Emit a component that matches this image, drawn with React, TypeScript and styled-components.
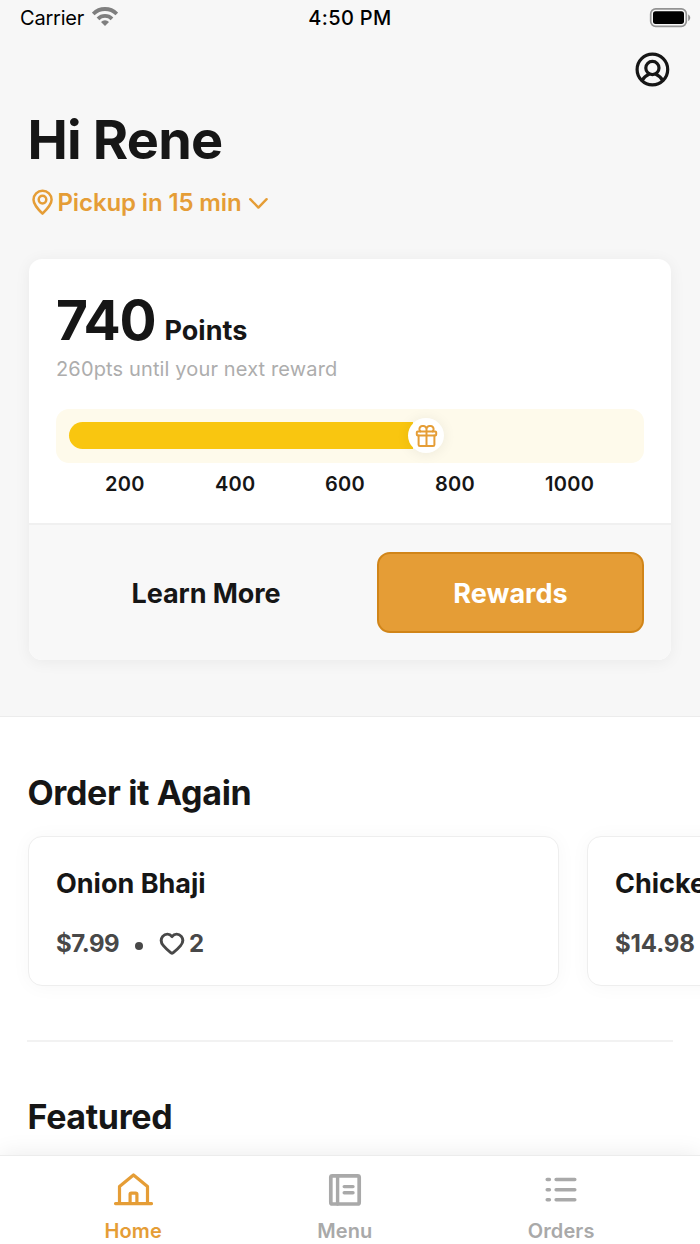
import React from "react";
import styled, { createGlobalStyle } from "styled-components";

const GlobalStyle = createGlobalStyle`
  * { box-sizing: border-box; }
  body { margin: 0; background: #fff; font-family: Inter, "Liberation Sans", sans-serif; color: #161616; }
  svg { display: block; flex: none; }
  button { font: inherit; color: inherit; border: 0; background: none; padding: 0; }
`;

const Screen = styled.div`
  width: 700px;
  height: 1244px;
  overflow: hidden;
  display: flex;
  flex-direction: column;
  background: #fff;
`;
const Scroll = styled.main`
  flex: 1;
  min-height: 0;
  overflow: hidden;
`;
const Hero = styled.section`
  height: 717px;
  background: #f7f7f7;
  border-bottom: 1px solid #ececec;
`;
const StatusBar = styled.div`
  height: 36px;
  display: grid;
  grid-template-columns: 1fr auto 1fr;
  align-items: center;
  padding: 0 9px;
  font-size: 20px;
  line-height: 36px;
  color: #000;
`;
const Carrier = styled.div`
  display: flex;
  align-items: center;
  gap: 8px;
  margin-left: 11px;
  letter-spacing: -0.2px;

  svg { margin-top: -3px; }
`;
const Clock = styled.div`
  font-weight: 500;
  letter-spacing: 0.35px;
`;
const Battery = styled.div`
  justify-self: end;
`;
const TopActions = styled.div`
  display: flex;
  justify-content: flex-end;
  padding: 15px 30px 0 0;
`;
const Greeting = styled.h1`
  margin: 18px 0 0 27.5px;
  font-size: 54px;
  line-height: 70px;
  font-weight: 700;
  letter-spacing: -0.8px;
`;
const Pickup = styled.button`
  display: flex;
  align-items: center;
  margin: 12px 0 0 31px;
  height: 32px;
  font-size: 24px;
  line-height: 32px;
  font-weight: 600;
  color: #e59d36;
`;
const PickupText = styled.span`
  margin: 0 6px 0 3.5px;
  letter-spacing: -0.12px;
`;
const PointsCard = styled.div`
  margin: 40px 29px 0;
  height: 401px;
  border-radius: 13px;
  overflow: hidden;
  background: #fff;
  box-shadow: 0 2px 16px rgba(0, 0, 0, 0.06);
`;
const PointsBody = styled.div`
  height: 266px;
  padding: 26px 27px 0;
  border-bottom: 2px solid #f0f0f0;
`;
const PointsTotal = styled.div`
  display: flex;
  align-items: baseline;
  gap: 9px;
  height: 70px;
  line-height: 70px;
  font-weight: 700;
`;
const Total = styled.span`
  font-size: 55px;
  letter-spacing: -1.2px;
`;
const Unit = styled.span`
  font-size: 27px;
  line-height: 1;
  letter-spacing: 0;
`;
const Hint = styled.div`
  line-height: 28px;
  font-size: 20px;
  letter-spacing: 0.14px;
  color: #adadad;
`;
const Track = styled.div`
  margin-top: 26px;
  height: 54px;
  padding: 0 13px 1px;
  display: flex;
  align-items: center;
  border-radius: 13px;
  background: #fefaeb;
`;
const Fill = styled.div`
  width: 344px;
  height: 27px;
  border-radius: 13.5px 0 0 13.5px;
  background: #f9c610;
`;
const Thumb = styled.div`
  width: 36px;
  height: 35px;
  margin-left: -5px;
  display: grid;
  place-items: center;
  border-radius: 50%;
  background: #fff;
  box-shadow: 0 1px 14px rgba(0, 0, 0, 0.07);
`;
const Scale = styled.div`
  display: grid;
  grid-template-columns: repeat(5, 110px);
  padding-left: 49px;
  margin-top: 6px;
  font-size: 20px;
  line-height: 30px;
  font-weight: 600;
  letter-spacing: 0.3px;
`;
const PointsActions = styled.div`
  height: 135px;
  display: grid;
  grid-template-columns: 300px 267px;
  justify-content: space-between;
  padding: 27px;
  background: #f8f8f8;
`;
const ActionButton = styled.button<{ $primary?: boolean }>`
  padding-top: 2px;
  border: 2px solid ${(p) => (p.$primary ? "#d18519" : "transparent")};
  border-radius: 13px;
  background: ${(p) => (p.$primary ? "#e59d36" : "transparent")};
  color: ${(p) => (p.$primary ? "#fff" : "#161616")};
  font-size: 27px;
  font-weight: 700;
  letter-spacing: ${(p) => (p.$primary ? "0.05px" : "-0.1px")};
`;
const SectionTitle = styled.h2`
  margin: 54px 0 0 27.5px;
  font-size: 34px;
  line-height: 44px;
  font-weight: 700;
  letter-spacing: -0.35px;
`;
const Carousel = styled.div`
  display: flex;
  gap: 28px;
  margin-top: 21px;
  padding-left: 28px;
`;
const DishCard = styled.article`
  flex: none;
  width: 531px;
  height: 150px;
  padding: 30px 27px 28px;
  border: 1px solid #eeeeee;
  border-radius: 14px;
  background: #fff;
  box-shadow: 0 1px 20px rgba(0, 0, 0, 0.035);
`;
const DishName = styled.div`
  font-size: 27px;
  line-height: 34px;
  font-weight: 700;
`;
const DishMeta = styled.div`
  display: flex;
  align-items: center;
  margin-top: 27px;
  font-size: 24px;
  line-height: 32px;
  font-weight: 700;
  color: #484848;
`;
const Price = styled.span<{ $tracking: number }>`
  letter-spacing: ${(p) => p.$tracking}px;
`;
const Bullet = styled.span`
  width: 8px;
  height: 8px;
  margin: 3px 16px 0 16px;
  border-radius: 50%;
  background: currentColor;
`;
const Likes = styled.span`
  display: flex;
  align-items: center;
  gap: 4px;
`;
const Divider = styled.hr`
  margin: 54px 27px -1px;
  border: 0;
  height: 2px;
  background: #f2f2f2;
`;
const TabBar = styled.nav`
  position: relative;
  height: 89px;
  display: flex;
  justify-content: space-between;
  padding: 17px 105.5px 0 104.5px;
  border-top: 1px solid #ececec;
  background: #fff;
  box-shadow: 0 -1px 22px rgba(0, 0, 0, 0.08);
`;
const Tab = styled.button<{ $active?: boolean }>`
  display: flex;
  flex-direction: column;
  align-items: center;
  gap: 10px;
  height: 72px;
  font-size: 20px;
  line-height: 28px;
  font-weight: 600;
  letter-spacing: 0.1px;
  color: ${(p) => (p.$active ? "#e59d36" : "#a9a9a9")};
`;

const Svg = styled.svg.attrs({ fill: "none", stroke: "currentColor", strokeLinecap: "round", strokeLinejoin: "round" })``;

const WifiIcon = () => (
  <Svg width="26" height="19" viewBox="0 0 26 19" color="#7f7f7f" strokeWidth="3.8">
    <path d="M1.2 6.9a16.7 16.7 0 0 1 23.6 0M6 11.800a9.900 9.900 0 0 1 14 0" strokeLinecap="butt" />
    <path d="M13 19 9 15.100a5.500 5.500 0 0 1 8 0Z" fill="currentColor" stroke="none" />
  </Svg>
);
const BatteryIcon = () => (
  <Svg width="42" height="20" viewBox="0 0 42 20">
    <rect x="1.7" y="0.9" width="35.6" height="17.4" rx="5" stroke="#939393" strokeWidth="1.7" />
    <rect x="4" y="3.3" width="31" height="12.6" rx="2.6" fill="#000" stroke="none" />
    <path d="M39.2 6.4c2.7 1.3 2.7 5.200 0 6.500Z" fill="#8c8c8c" stroke="none" />
  </Svg>
);
const ProfileIcon = () => (
  <Svg width="36" height="36" viewBox="0 0 36 36" strokeWidth="3.200">
    <circle cx="18.4" cy="18.500" r="15.300" />
    <circle cx="18.4" cy="17" r="6.600" />
    <path d="M8.200 29.400c1.600-3.100 3.800-4.800 6.400-5.900M28.600 29.400c-1.600-3.100-3.800-4.800-6.400-5.900" />
  </Svg>
);
const PinIcon = () => (
  <Svg width="23" height="28" viewBox="0 0 23 28" strokeWidth="2.5">
    <path d="M11.500 24.700C6.600 19.600 2.500 15.400 2.500 10.700a9 9 0 0 1 18.100 0C20.600 15.400 16.400 19.600 11.500 24.700Z" />
    <circle cx="11.500" cy="10.600" r="3.800" />
  </Svg>
);
const ChevronIcon = () => (
  <Svg width="21" height="14" viewBox="0 0 21 14" strokeWidth="2.400">
    <path d="m2.200 3.200 8.200 8.400L18.600 3.200" />
  </Svg>
);
const GiftIcon = () => (
  <Svg width="24" height="24" viewBox="0 0 24 24" color="#e59d36" strokeWidth="2">
    <rect x="2.800" y="7.400" width="19.400" height="4.200" rx="1" />
    <path d="M4.600 11.600v9.100q0 1.300 1.300 1.300h13.200q1.300 0 1.300-1.300v-9.100M12.500 7.400V22M12.500 7.400V5.300a3.100 3.100 0 0 1 3.100-3.200h1a3 3 0 0 1 3 3.200q0 1.300-1 2.100M12.500 7.400V5.300a3.100 3.100 0 0 0-3.100-3.200h-1a3 3 0 0 0-3 3.200q0 1.300 1 2.100" />
  </Svg>
);
const HeartIcon = () => (
  <Svg width="26" height="24" viewBox="0 0 26 24" strokeWidth="2.900">
    <path d="M13 4.600C10.500 1.300 6.200 1.400 3.700 4.400c-2.200 2.900-1.600 6.500.7 9.200 2.300 2.800 5 5.200 7.600 7.200q1 .700 2 0c2.600-2 5.300-4.400 7.600-7.200 2.300-2.700 2.900-6.300.7-9.200C19.800 1.400 15.500 1.300 13 4.600Z" />
  </Svg>
);
const HomeIcon = () => (
  <Svg width="40" height="34" viewBox="0 0 40 34" strokeWidth="3.200">
    <path d="M6.500 29.800V13.600L20.500 2l14 11.600v16.200M2.500 30.600h36M17.100 30V21.300q0-1.200 1.200-1.200h4.400q1.200 0 1.200 1.200V30" />
  </Svg>
);
const MenuIcon = () => (
  <Svg width="34" height="34" viewBox="0 0 34 34" strokeWidth="3.700">
    <rect x="2.800" y="2.800" width="28.400" height="28.200" rx="1.500" />
    <path d="M9.600 3v28M16.200 13.600h8.800M16.200 19.800h8.800" strokeWidth="3.400" />
  </Svg>
);
const OrdersIcon = () => (
  <Svg width="34" height="34" viewBox="0 0 34 34" strokeWidth="3.500">
    <path d="M3.200 6.600h2.200M12.100 6.600h18.700M3.200 16.700h2.200M12.100 16.700h18.700M3.200 26.800h2.200M12.100 26.800h18.700" />
  </Svg>
);

export default function App() {
  return (
    <Screen>
      <GlobalStyle />
      <Scroll>
        <Hero>
          <StatusBar>
            <Carrier>Carrier <WifiIcon /></Carrier>
            <Clock>4:50 PM</Clock>
            <Battery><BatteryIcon /></Battery>
          </StatusBar>
          <TopActions>
            <button aria-label="Profile"><ProfileIcon /></button>
          </TopActions>
          <Greeting>Hi Rene</Greeting>
          <Pickup>
            <PinIcon />
            <PickupText>Pickup in 15 min</PickupText>
            <ChevronIcon />
          </Pickup>
          <PointsCard>
            <PointsBody>
              <PointsTotal><Total>740</Total><Unit>Points</Unit></PointsTotal>
              <Hint>260pts until your next reward</Hint>
              <Track><Fill /><Thumb><GiftIcon /></Thumb></Track>
              <Scale>
                {[200, 400, 600, 800, 1000].map((n) => <span key={n}>{n}</span>)}
              </Scale>
            </PointsBody>
            <PointsActions>
              <ActionButton>Learn More</ActionButton>
              <ActionButton $primary>Rewards</ActionButton>
            </PointsActions>
          </PointsCard>
        </Hero>
        <SectionTitle>Order it Again</SectionTitle>
        <Carousel>
          <DishCard>
            <DishName>Onion Bhaji</DishName>
            <DishMeta><Price $tracking={-0.5}>$7.99</Price><Bullet /><Likes><HeartIcon />2</Likes></DishMeta>
          </DishCard>
          <DishCard>
            <DishName>Chicken</DishName>
            <DishMeta><Price $tracking={-0.1}>$14.98</Price></DishMeta>
          </DishCard>
        </Carousel>
        <Divider />
        <SectionTitle>Featured</SectionTitle>
      </Scroll>
      <TabBar>
        <Tab $active><HomeIcon />Home</Tab>
        <Tab><MenuIcon />Menu</Tab>
        <Tab><OrdersIcon />Orders</Tab>
      </TabBar>
    </Screen>
  );
}
